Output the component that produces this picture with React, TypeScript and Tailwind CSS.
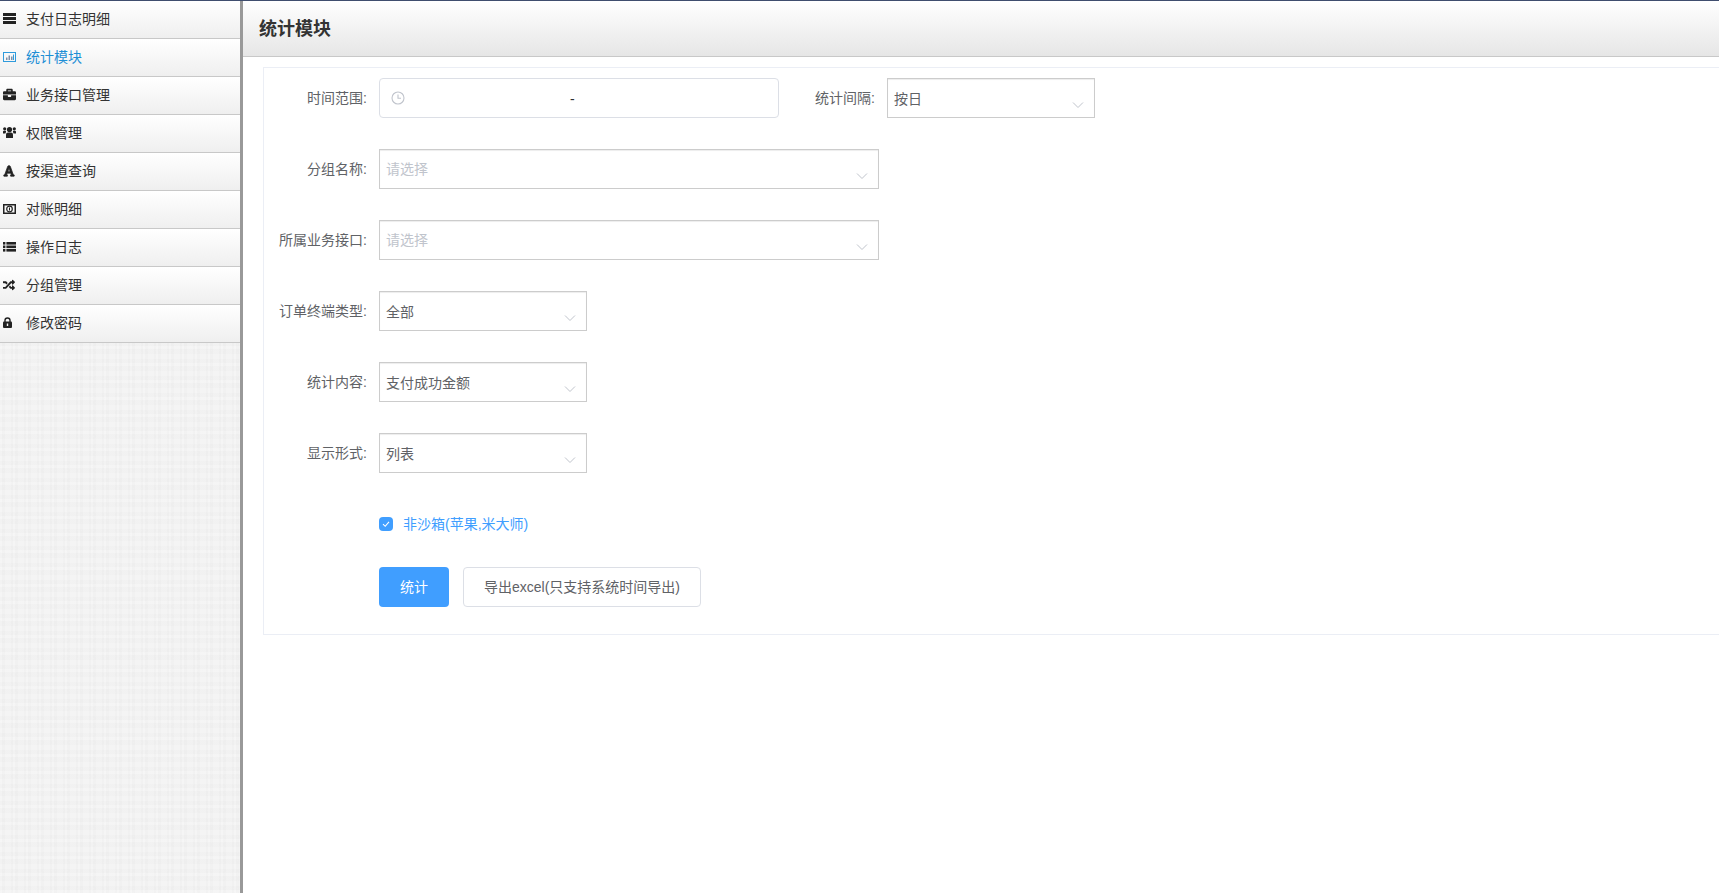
import React from "react";
import { FaBriefcase, FaFont, FaRandom } from "react-icons/fa";

function IconBars() {
  return (
    <svg width="13" height="11" viewBox="0 0 13 11" fill="currentColor">
      <rect x="0" y="0" width="13" height="3" />
      <rect x="0" y="4" width="13" height="3" />
      <rect x="0" y="8" width="13" height="3" />
    </svg>
  );
}
function IconChart() {
  return (
    <svg width="13" height="10" viewBox="0 0 13 10" fill="none">
      <rect x="0.5" y="0.5" width="12" height="9" stroke="currentColor" />
      <path d="M3 8V5.5H4.5V8ZM5.5 8V3.5H7V8ZM8 8V4.5H9.5V8Z" fill="#7f8fa8" />
      <rect x="10" y="2.5" width="1" height="5.5" fill="currentColor" />
    </svg>
  );
}
function IconUsers() {
  return (
    <svg width="13" height="11" viewBox="0 0 13 11" fill="currentColor">
      <circle cx="6.5" cy="2.6" r="2.6" />
      <path d="M3 11V7.5C3 6.2 4 5.5 5 5.5H8C9 5.5 10 6.2 10 7.5V11Z" />
      <circle cx="1.7" cy="1.8" r="1.6" />
      <circle cx="11.3" cy="1.8" r="1.6" />
      <path d="M0 6.5V4.8C0 4 .6 3.8 1.2 3.8H3C3 4.6 3.2 5 2.4 6.5ZM13 6.5V4.8C13 4 12.4 3.8 11.8 3.8H10C10 4.6 9.8 5 10.6 6.5Z" />
    </svg>
  );
}
function IconMoney() {
  return (
    <svg width="13" height="10" viewBox="0 0 13 10" fill="none">
      <rect x="0.75" y="0.75" width="11.5" height="8.5" stroke="currentColor" strokeWidth="1.5" />
      <circle cx="6.5" cy="5" r="2.8" stroke="currentColor" strokeWidth="1.2" />
      <path d="M6.5 3.5V6.5" stroke="currentColor" strokeWidth="1" />
    </svg>
  );
}
function IconList() {
  return (
    <svg width="13" height="10" viewBox="0 0 13 10" fill="currentColor">
      {[0, 3.5, 7].map((y) => (
        <g key={y}>
          <rect x="0" y={y} width="2.4" height="2.6" />
          <rect x="3.4" y={y} width="9.6" height="2.6" />
        </g>
      ))}
    </svg>
  );
}
function IconLock() {
  return (
    <svg width="9" height="11" viewBox="0 0 9 11" fill="none">
      <path d="M2 5V3.2C2 1.8 3.1 1 4.5 1S7 1.8 7 3.2V5" stroke="currentColor" strokeWidth="1.4" />
      <rect x="0" y="4.5" width="9" height="6.5" rx="1" fill="currentColor" />
      <rect x="3.8" y="6.5" width="1.4" height="2.5" fill="#f5f5f5" />
    </svg>
  );
}

const menu: { icon: React.ReactNode; label: string; active?: boolean }[] = [
  { icon: <IconBars />, label: "支付日志明细" },
  { icon: <IconChart />, label: "统计模块", active: true },
  { icon: <FaBriefcase size={13} />, label: "业务接口管理" },
  { icon: <IconUsers />, label: "权限管理" },
  { icon: <FaFont size={12} stroke="currentColor" strokeWidth={30} />, label: "按渠道查询" },
  { icon: <IconMoney />, label: "对账明细" },
  { icon: <IconList />, label: "操作日志" },
  { icon: <FaRandom size={12} />, label: "分组管理" },
  { icon: <IconLock />, label: "修改密码" },
];

function Chevron() {
  return (
    <svg width="12" height="8" viewBox="0 0 12 8" fill="none" className="absolute right-[10px] top-[22px] text-[#c0c4cc]">
      <path d="M1 1.5 L6 6.5 L11 1.5" stroke="currentColor" strokeWidth="1" />
    </svg>
  );
}

function Select({ value, placeholder, width }: { value?: string; placeholder?: string; width: string }) {
  return (
    <div className={`relative flex h-10 items-center border border-[#cccccc] bg-white pl-[6px] shadow-[inset_0_1px_1px_rgba(0,0,0,0.075)] ${width}`}>
      <span className={value ? "pt-[2px] text-[#606266]" : "text-[#c0c4cc]"}>{value ?? placeholder}</span>
      <Chevron />
    </div>
  );
}

function Row({ label, children }: { label: string; children: React.ReactNode }) {
  return (
    <div className="flex h-10 items-center">
      <label className="w-[115px] shrink-0 pr-3 text-right text-[#606266]">{label}:</label>
      {children}
    </div>
  );
}

export default function App() {
  return (
    <div className="flex h-screen flex-col overflow-hidden bg-white font-['Liberation_Sans','Noto_Sans_CJK_SC',sans-serif] text-sm">
      <div className="h-px shrink-0 bg-[#3f4d6e]" />
      <div className="flex min-h-0 flex-1">
        <aside className="w-[243px] shrink-0 border-r-[3px] border-[#999999] bg-[#f2f2f2] bg-[repeating-linear-gradient(90deg,rgba(255,255,255,0.16)_0_2px,rgba(0,0,0,0.006)_2px_5px,rgba(255,255,255,0.1)_5px_11px,rgba(0,0,0,0.008)_11px_13px),repeating-linear-gradient(0deg,rgba(255,255,255,0.14)_0_3px,rgba(0,0,0,0.006)_3px_7px,rgba(255,255,255,0.08)_7px_12px,rgba(0,0,0,0.008)_12px_17px)]">
          {menu.map((m) => (
            <div
              key={m.label}
              className={`flex h-[38px] items-center border-b border-[#c8c8c8] bg-gradient-to-b from-white to-[#efefef] pb-[2px] ${m.active ? "text-[#1e8fd5]" : "text-[#333333]"}`}
            >
              <span className={`flex w-[26px] shrink-0 items-center pl-[3px] ${m.active ? "text-[#2f9bdc]" : "text-[#222222]"}`}>
                {m.icon}
              </span>
              <span>{m.label}</span>
            </div>
          ))}
        </aside>
        <main className="min-w-0 flex-1 overflow-hidden">
          <div className="flex h-[56px] items-center border-b border-[#c8c8c8] bg-gradient-to-b from-white to-[#e6e6e6] pl-4">
            <h1 className="text-lg font-bold text-[#333333]">统计模块</h1>
          </div>
          <div className="ml-5 mt-[10px] flex w-[1520px] flex-col gap-[31px] border border-[#ebeef5] pb-[27px] pt-[10px]">
            <div className="flex h-10 items-center">
              <label className="w-[115px] shrink-0 pr-3 text-right text-[#606266]">时间范围:</label>
              <div className="flex h-10 w-[400px] items-center rounded border border-[#dcdfe6] pl-[11px]">
                <svg width="14" height="14" viewBox="0 0 14 14" fill="none" className="shrink-0 text-[#c0c4cc]">
                  <circle cx="7" cy="7" r="6" stroke="currentColor" strokeWidth="1.1" />
                  <path d="M7 3.5 V7.3 H10" stroke="currentColor" strokeWidth="1.1" />
                </svg>
                <span className="ml-[165px] pt-[2px] text-[#303133]">-</span>
              </div>
              <label className="w-[108px] shrink-0 pr-3 text-right text-[#606266]">统计间隔:</label>
              <Select value="按日" width="w-[208px]" />
            </div>
            <Row label="分组名称"><Select placeholder="请选择" width="w-[500px]" /></Row>
            <Row label="所属业务接口"><Select placeholder="请选择" width="w-[500px]" /></Row>
            <Row label="订单终端类型"><Select value="全部" width="w-[208px]" /></Row>
            <Row label="统计内容"><Select value="支付成功金额" width="w-[208px]" /></Row>
            <Row label="显示形式"><Select value="列表" width="w-[208px]" /></Row>
            <div className="flex h-10 items-center pl-[115px]">
              <span className="flex h-[14px] w-[14px] items-center justify-center rounded-sm bg-[#409eff]">
                <svg width="10" height="10" viewBox="0 0 10 10" fill="none">
                  <path d="M2 5.2 L4.2 7.3 L8 2.8" stroke="white" strokeWidth="1.1" />
                </svg>
              </span>
              <span className="ml-[10px] text-[#409eff]">非沙箱(苹果,米大师)</span>
            </div>
            <div className="-mt-2 flex items-center gap-[14px] pl-[115px]">
              <button className="h-10 w-[70px] rounded bg-[#409eff] text-white">统计</button>
              <button className="h-10 w-[238px] rounded border border-[#dcdfe6] bg-white text-[#606266]">导出excel(只支持系统时间导出)</button>
            </div>
          </div>
        </main>
      </div>
    </div>
  );
}
